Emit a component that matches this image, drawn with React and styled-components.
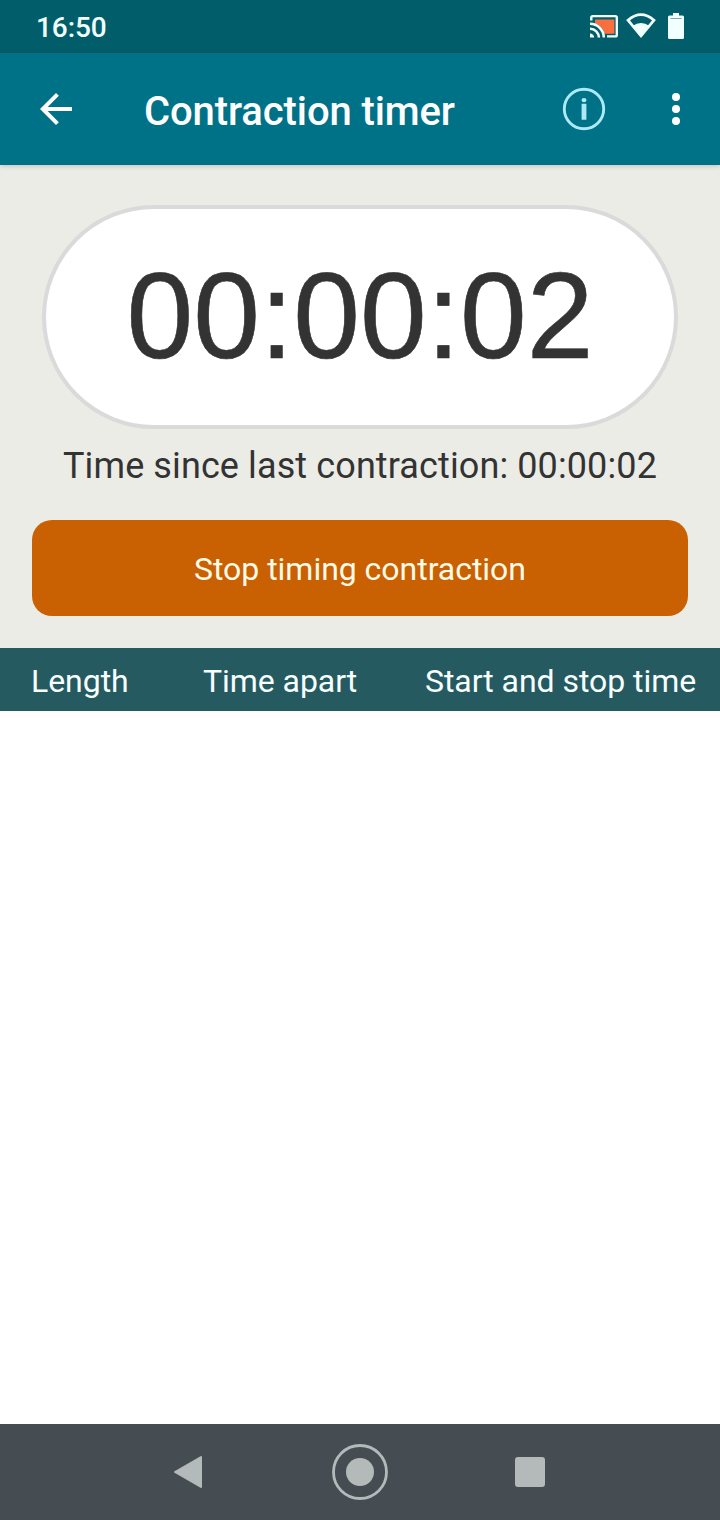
import React from "react";
import styled, { createGlobalStyle } from "styled-components";

const GlobalStyle = createGlobalStyle`
   * {
      box-sizing: border-box;
   }

   body {
      margin: 0;
      background: #ffffff;
      font-family: Roboto, "Noto Sans", sans-serif;
   }
`;

const Screen = styled.div`
   width: 720px;
   height: 1520px;
   display: flex;
   flex-direction: column;
   overflow: hidden;
   background: #ffffff;
`;

const StatusBar = styled.div`
   height: 53px;
   flex: none;
   display: flex;
   align-items: center;
   justify-content: space-between;
   padding: 0 36px 0 36px;
   background: #025d6a;
   color: #f2ffff;
`;

const Clock = styled.span`
   font-size: 28px;
   font-weight: 500;
   line-height: 53px;
   padding-top: 2px;
   letter-spacing: -0.1px;
`;

const StatusIcons = styled.div`
   display: flex;
   align-items: center;
   gap: 8px;
   padding-bottom: 1px;
`;

const AppBar = styled.header`
   height: 112px;
   flex: none;
   display: flex;
   align-items: center;
   padding: 0 20px 0 32px;
   background: #007288;
   color: #ffffff;
   z-index: 1;
   box-shadow: 0 1px 5px rgba(0, 0, 0, 0.18);
`;

const IconButton = styled.button`
   display: flex;
   padding: 0;
   border: 0;
   background: none;
   color: ${(props) => props.$color || "#ffffff"};
   margin-right: ${(props) => props.$gap || 0}px;
`;

const Title = styled.h1`
   flex: 1;
   margin: 6px 0 0 64px;
   font-size: 40px;
   font-weight: 500;
   line-height: 48px;
   letter-spacing: -0.1px;
   white-space: nowrap;
`;

const TimerPanel = styled.section`
   height: 483px;
   flex: none;
   display: flex;
   flex-direction: column;
   align-items: center;
   padding: 40px 32px 32px;
   background: #ebece6;
`;

const TimerDisplay = styled.div`
   width: 636px;
   height: 224px;
   display: flex;
   align-items: center;
   justify-content: center;
   padding-bottom: 4px;
   border: 4px solid #dadada;
   border-radius: 112px;
   background: #ffffff;
   color: #333333;
   font-family: "Liberation Sans", Arial, sans-serif;
   font-size: 120px;
   line-height: 138px;
   -webkit-text-stroke: 0.6px #333333;
`;

const TimerDigits = styled.span`
   transform: scaleY(1.016);
`;

const SinceLast = styled.p`
   margin: 15px 0 0;
   color: #333333;
   font-size: 36px;
   line-height: 44px;
   letter-spacing: 0.11px;
   white-space: nowrap;
`;

const StopButton = styled.button`
   width: 100%;
   height: 96px;
   margin-top: auto;
   padding: 2px 0 0;
   border: 0;
   border-radius: 20px;
   background: #c96002;
   color: #fffbe6;
   font-family: inherit;
   font-size: 32px;
   letter-spacing: -0.03px;
`;

const TableHeader = styled.div`
   height: 63px;
   flex: none;
   display: grid;
   grid-template-columns: 172px 222px auto;
   align-items: center;
   padding: 3px 0 0 31px;
   background: #255a61;
   color: #f8ffff;
   font-size: 32px;
   letter-spacing: -0.05px;
   white-space: nowrap;
`;

const History = styled.main`
   flex: 1;
   background: #ffffff;
`;

const NavBar = styled.nav`
   height: 96px;
   flex: none;
   display: flex;
   align-items: center;
   justify-content: center;
   gap: 114px;
   background: #454d52;
   color: #b4b9b9;
`;

const CastIcon = () => (
   <svg width="29" height="24" viewBox="-1 -0.4 29 24">
      <path d="M5 5h19.4v14.4H14C13 14 10 11 5 9z" fill="#f9703e" />
      <path d="M1.3 6V3.2Q1.3 1.7 2.8 1.7h22.5Q26.8 1.7 26.8 3.2v17.3q0 1.5-1.5 1.5H17" fill="none" stroke="#f2ffff" strokeWidth="2.4" />
      <path d="M0 9.4A13.8 13.8 0 0 1 13.8 23.2M0 14.3A8.9 8.9 0 0 1 8.9 23.2" fill="none" stroke="#f2ffff" strokeWidth="2.5" />
      <path d="M0 19v4.2h4.2A4.2 4.2 0 0 0 0 19z" fill="#f2ffff" />
   </svg>
);

const WifiIcon = () => (
   <svg width="30" height="26" viewBox="0 0 30 26">
      <path d="M2 7.2Q15-3.8 28 7.2L15 23z" fill="none" stroke="#f2ffff" strokeWidth="2.7" />
      <path d="M6.5 13Q15 7 23.5 13L15 24z" fill="#f2ffff" />
   </svg>
);

const BatteryIcon = () => (
   <svg width="16" height="26" viewBox="0 0 16 26" style={{ marginLeft: 4 }}>
      <path d="M5 0h6v2.5h3.5Q16 2.5 16 4v20.5q0 1.5-1.5 1.5h-13Q0 26 0 24.5V4q0-1.5 1.5-1.5H5z" fill="#f2ffff" />
      <path d="M2.5 5.5h11" stroke="#7fa9ae" strokeWidth="1" />
   </svg>
);

const BackArrow = () => (
   <svg width="48" height="48" viewBox="0 0 24 24" fill="currentColor">
      <path d="M20 11H7.83l5.59-5.59L12 4l-8 8 8 8 1.41-1.41L7.83 13H20v-2z" />
   </svg>
);

const InfoIcon = () => (
   <svg width="44" height="44" viewBox="0 0 44 44">
      <circle cx="22" cy="22" r="19.7" fill="none" stroke="currentColor" strokeWidth="2.9" />
      <ellipse cx="22" cy="13.1" rx="2.5" ry="2.2" fill="currentColor" />
      <path d="M19.6 16.8h4.8v16h-4.8z" fill="currentColor" />
   </svg>
);

const MoreIcon = () => (
   <svg width="48" height="48" viewBox="0 0 24 24" fill="currentColor">
      <circle cx="12" cy="6" r="2" />
      <circle cx="12" cy="12" r="2" />
      <circle cx="12" cy="18" r="2" />
   </svg>
);

export default function App() {
   const elapsed = "00:00:02";

   return (
      <>
         <GlobalStyle />
         <Screen>
            <StatusBar>
               <Clock>16:50</Clock>
               <StatusIcons>
                  <CastIcon />
                  <WifiIcon />
                  <BatteryIcon />
               </StatusIcons>
            </StatusBar>
            <AppBar>
               <IconButton aria-label="Back"><BackArrow /></IconButton>
               <Title>Contraction timer</Title>
               <IconButton aria-label="Information" $color="#aee9f7" $gap={46}><InfoIcon /></IconButton>
               <IconButton aria-label="More options"><MoreIcon /></IconButton>
            </AppBar>
            <TimerPanel>
               <TimerDisplay>
                  <TimerDigits>{elapsed}</TimerDigits>
               </TimerDisplay>
               <SinceLast>Time since last contraction: {elapsed}</SinceLast>
               <StopButton>Stop timing contraction</StopButton>
            </TimerPanel>
            <TableHeader>
               <span>Length</span>
               <span>Time apart</span>
               <span>Start and stop time</span>
            </TableHeader>
            <History />
            <NavBar>
               <IconButton aria-label="System back" $color="#b4b9b9">
                  <svg width="56" height="56" viewBox="0 0 56 56">
                     <path d="M13 28L39 13v30z" fill="currentColor" stroke="currentColor" strokeWidth="2" strokeLinejoin="round" />
                  </svg>
               </IconButton>
               <IconButton aria-label="Home" $color="#b4b9b9">
                  <svg width="56" height="56" viewBox="0 0 56 56">
                     <circle cx="28" cy="28" r="26.5" fill="none" stroke="currentColor" strokeWidth="2.8" />
                     <circle cx="28" cy="28" r="14" fill="currentColor" />
                  </svg>
               </IconButton>
               <IconButton aria-label="Recent apps" $color="#b4b9b9">
                  <svg width="56" height="56" viewBox="0 0 56 56">
                     <rect x="13" y="13" width="30" height="30" rx="3" fill="currentColor" />
                  </svg>
               </IconButton>
            </NavBar>
         </Screen>
      </>
   );
}
